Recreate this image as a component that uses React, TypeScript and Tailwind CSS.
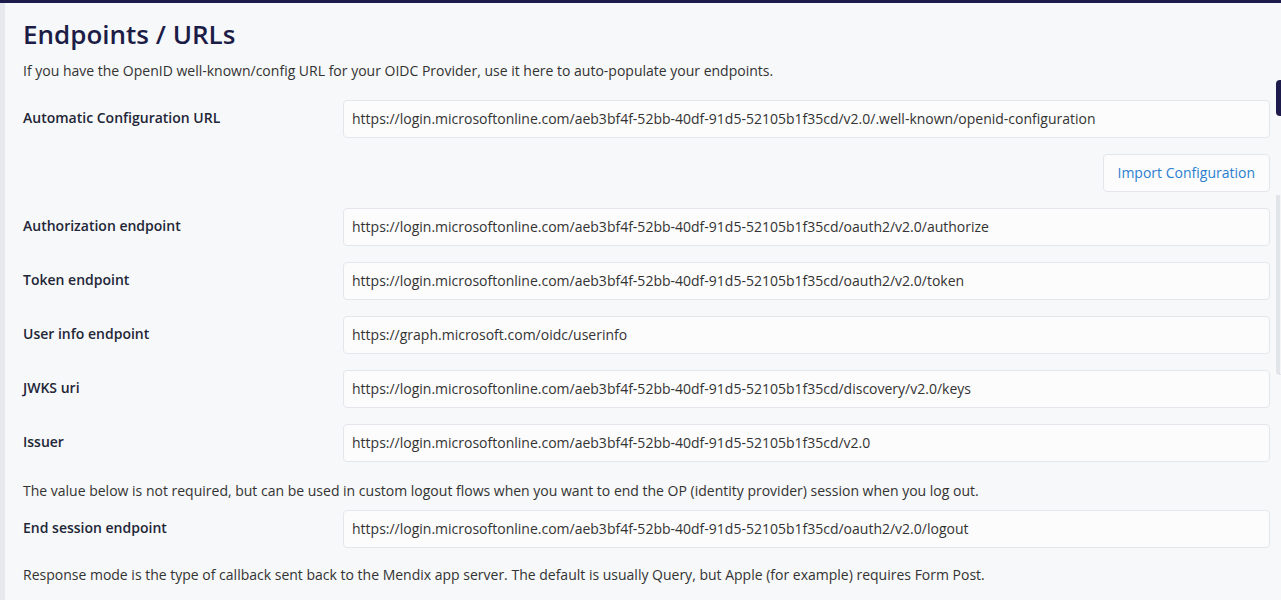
import React from "react";

const base = "https://login.microsoftonline.com/aeb3bf4f-52bb-40df-91d5-52105b1f35cd";

const rows = [
  { label: "Authorization endpoint", value: `${base}/oauth2/v2.0/authorize` },
  { label: "Token endpoint", value: `${base}/oauth2/v2.0/token` },
  { label: "User info endpoint", value: "https://graph.microsoft.com/oidc/userinfo" },
  { label: "JWKS uri", value: `${base}/discovery/v2.0/keys` },
  { label: "Issuer", value: `${base}/v2.0` },
];

const Field = ({ label, value }: { label: string; value: string }) => (
  <div className="flex items-center">
    <label className="w-[320px] shrink-0 pb-[2px] text-[14px] font-semibold text-[#222637] leading-5">
      {label}
    </label>
    <div className="flex-1 h-[38px] flex items-center px-[8px] pb-[1px] bg-[#fcfcfc] border border-[#e3e7eb] rounded-[4px] text-[14px] text-[#333]">
      {value}
    </div>
  </div>
);

const App = () => {
  return (
    <div
      className="relative h-[600px] overflow-hidden bg-[#f7f8f9]"
      style={{ fontFamily: '"Open Sans", "Noto Sans", sans-serif' }}
    >
      <div className="h-[3px] bg-[#1d1b4c]" />
      <div className="flex">
        <div className="w-[5px] shrink-0 bg-[#e5e8ec] min-h-[600px]" />
        <div className="flex-1 pl-[18px] pr-[11px]">
          <h1 className="mt-[15px] text-[26px] leading-[32px] font-semibold text-[#1c1d47]">
            Endpoints / URLs
          </h1>
          <p className="mt-[11px] text-[14px] leading-5 text-[#333]">
            If you have the OpenID well-known/config URL for your OIDC Provider, use it here to auto-populate your endpoints.
          </p>

          <div className="mt-[19px]">
            <Field
              label="Automatic Configuration URL"
              value={`${base}/v2.0/.well-known/openid-configuration`}
            />
          </div>

          <div className="mt-[16px] flex justify-end">
            <button className="h-[38px] px-[14px] pb-[1px] bg-[#fcfcfc] border border-[#e3e7eb] rounded-[4px] text-[14px] text-[#2b7fcf]">
              Import Configuration
            </button>
          </div>

          <div className="mt-[16px] flex flex-col gap-[16px]">
            {rows.map((r) => (
              <Field key={r.label} label={r.label} value={r.value} />
            ))}
          </div>

          <p className="mt-[19px] text-[14px] leading-5 text-[#333]">
            The value below is not required, but can be used in custom logout flows when you want to end the OP (identity provider) session when you log out.
          </p>

          <div className="mt-[9px]">
            <Field label="End session endpoint" value={`${base}/oauth2/v2.0/logout`} />
          </div>

          <p className="mt-[17px] text-[14px] leading-5 text-[#333]">
            Response mode is the type of callback sent back to the Mendix app server. The default is usually Query, but Apple (for example) requires Form Post.
          </p>

          <div className="mt-[12px] flex items-center">
            <label className="w-[320px] shrink-0 text-[14px] font-semibold text-[#222637] leading-5">
              Callback response mode
            </label>
            <div className="flex items-center gap-[8px] text-[14px] text-[#333]">
              <span className="w-[16px] h-[16px] rounded-full border-[5px] border-[#1c1d47] bg-white" />
              <span>Query</span>
              <span className="ml-[24px] w-[16px] h-[16px] rounded-full border border-[#9aa3ad] bg-white" />
              <span>Form Post</span>
            </div>
          </div>
        </div>
      </div>

      {/* floating side tabs at the right edge */}
      <div className="absolute left-[1276px] top-[80px] w-[10px] h-[36px] rounded-l-[4px] bg-[#1d1b4c]" />
      <div className="absolute left-[1276px] top-[195px] w-[10px] h-[180px] rounded-bl-[4px] border-l-[4px] border-b border-[#e1e5e9] bg-[#f3f5f7]" />
    </div>
  );
};

export default App;
